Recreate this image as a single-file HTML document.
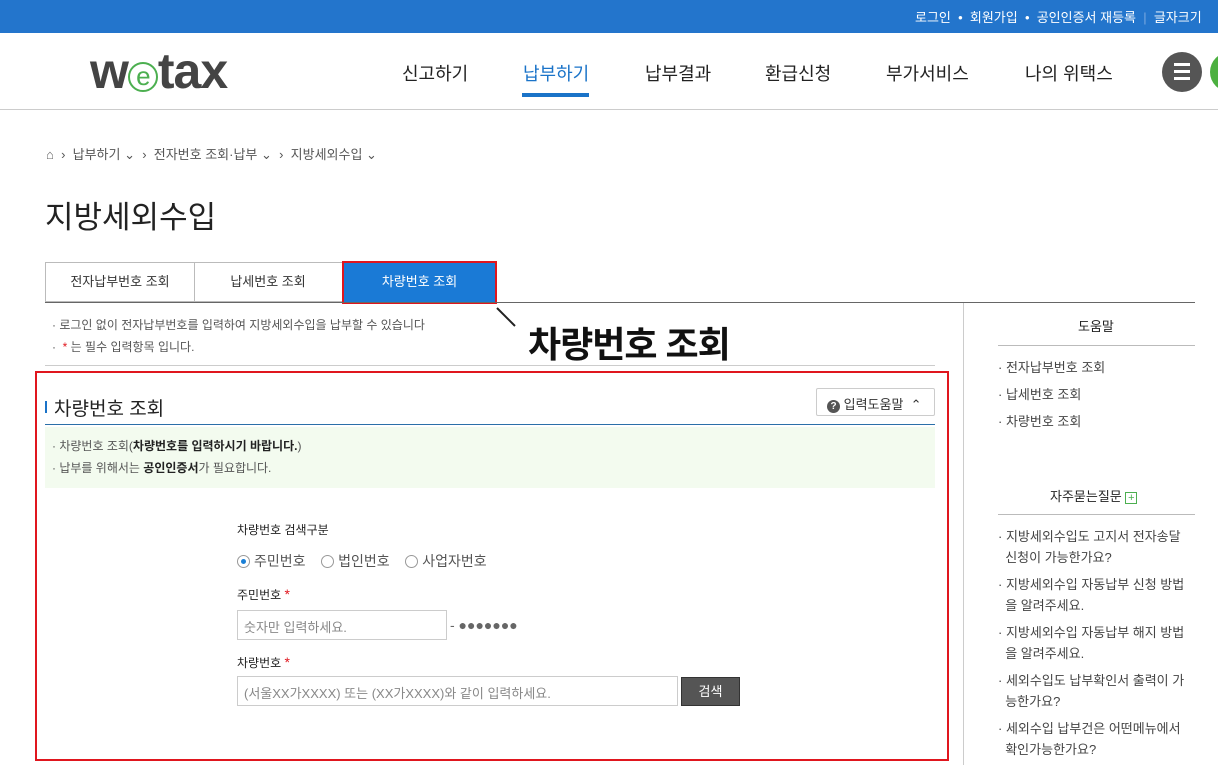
<!DOCTYPE html>
<html><head><meta charset="utf-8"><style>
*{margin:0;padding:0;box-sizing:border-box}
body{width:1218px;height:765px;overflow:hidden;background:#fff;font-family:"Liberation Sans","Noto Sans CJK KR",sans-serif;color:#333;position:relative}
.a{position:absolute;white-space:nowrap}
.top{position:absolute;left:0;top:0;width:1218px;height:33px;background:#2375cc;color:#fff;font-size:13px}
.nav{font-size:18px;color:#222;top:60px}
.rad{display:inline-block;width:13px;height:13px;border:1px solid #999;border-radius:50%;vertical-align:-2px;margin-right:4px;position:relative}
.rad.on::after{content:"";position:absolute;left:3px;top:3px;width:5px;height:5px;border-radius:50%;background:#1a7fd6}
.inp{position:absolute;border:1px solid #ccc;height:30px;font-size:13px;color:#888;padding:7px 6px}
.ri{font-size:13px;color:#444}
</style></head><body>
<div class="top">
<span class="a" style="left:915px;top:7px">로그인 &nbsp;•&nbsp; 회원가입 &nbsp;•&nbsp; 공인인증서 재등록 <span style="color:#7aa9e0">&nbsp;|&nbsp;</span> 글자크기</span>
</div>
<div class="a" style="left:0;top:109px;width:1218px;height:1px;background:#ccc"></div>
<div class="a" style="left:90px;top:42px;font-size:50px;font-weight:bold;color:#444;letter-spacing:-1px">w<span style="display:inline-block;width:30px;height:30px;border:2px solid #4caf50;border-radius:50%;color:#4caf50;font-size:26px;font-weight:normal;line-height:25px;text-align:center;vertical-align:3px">e</span>tax</div>
<span class="a nav" style="left:402px">신고하기</span>
<span class="a nav" style="left:523px;color:#1a73c8">납부하기</span>
<div class="a" style="left:522px;top:93px;width:67px;height:4px;background:#1a73c8"></div>
<span class="a nav" style="left:645px">납부결과</span>
<span class="a nav" style="left:765px">환급신청</span>
<span class="a nav" style="left:886px">부가서비스</span>
<span class="a nav" style="left:1025px">나의 위택스</span>
<div class="a" style="left:1162px;top:52px;width:40px;height:40px;border-radius:50%;background:#555"></div>
<div class="a" style="left:1174px;top:63px;width:16px;height:3px;background:#fff;box-shadow:0 7px 0 #fff,0 14px 0 #fff"></div>
<div class="a" style="left:1210px;top:52px;width:40px;height:40px;border-radius:50%;background:#4cb040"></div>

<div class="a" style="left:46px;top:144px;font-size:13px;color:#555">
<span style="color:#666">⌂</span> &nbsp;›&nbsp; 납부하기 ⌄ &nbsp;›&nbsp; 전자번호 조회·납부 ⌄ &nbsp;›&nbsp; 지방세외수입 ⌄</div>
<div class="a" style="left:45px;top:192px;font-size:31px;color:#222">지방세외수입</div>

<div class="a" style="left:45px;top:262px;width:150px;height:40px;border:1px solid #bbb;font-size:13px;text-align:center;line-height:38px">전자납부번호 조회</div>
<div class="a" style="left:194px;top:262px;width:149px;height:40px;border:1px solid #bbb;border-left:none;font-size:13px;text-align:center;line-height:38px">납세번호 조회</div>
<div class="a" style="left:342px;top:261px;width:155px;height:43px;border:2px solid #e0161e;background:#1a7ad6;color:#fff;font-size:13px;text-align:center;line-height:38px">차량번호 조회</div>
<div class="a" style="left:497px;top:302px;width:698px;height:1px;background:#666"></div>
<div class="a" style="left:45px;top:302px;width:452px;height:1px;background:#666"></div>
<svg class="a" style="left:495px;top:306px" width="24" height="24"><line x1="2" y1="2" x2="20" y2="20" stroke="#222" stroke-width="2"/></svg>
<div class="a" style="left:528px;top:316px;font-size:36px;font-weight:bold;color:#111;letter-spacing:-1px">차량번호 조회</div>

<div class="a" style="left:52px;top:316px;font-size:12px;color:#555">· 로그인 없이 전자납부번호를 입력하여 지방세외수입을 납부할 수 있습니다</div>
<div class="a" style="left:52px;top:338px;font-size:12px;color:#555">· &nbsp;<span style="color:#e0161e">*</span> 는 필수 입력항목 입니다.</div>
<div class="a" style="left:45px;top:365px;width:890px;height:1px;background:#ccc"></div>
<div class="a" style="left:963px;top:303px;width:1px;height:462px;background:#ccc"></div>

<div class="a" style="left:35px;top:371px;width:914px;height:390px;border:2px solid #e0161e"></div>
<div class="a" style="left:45px;top:401px;width:2px;height:12px;background:#1a73c8"></div>
<div class="a" style="left:54px;top:394px;font-size:19px;color:#222">차량번호 조회</div>
<div class="a" style="left:816px;top:388px;width:119px;height:28px;border:1px solid #ccc;border-radius:2px;font-size:13px;padding:5px 10px;color:#333"><span style="display:inline-block;width:13px;height:13px;border-radius:50%;background:#555;color:#fff;font-size:10px;text-align:center;line-height:13px;font-weight:bold">?</span> 입력도움말 &nbsp;⌃</div>
<div class="a" style="left:45px;top:424px;width:890px;height:1px;background:#2a6fa8"></div>
<div class="a" style="left:45px;top:427px;width:890px;height:61px;background:#f3fbef"></div>
<div class="a" style="left:52px;top:437px;font-size:12px;color:#555">· 차량번호 조회(<b style="color:#222">차량번호를 입력하시기 바랍니다.</b>)</div>
<div class="a" style="left:52px;top:459px;font-size:12px;color:#555">· 납부를 위해서는 <b style="color:#222">공인인증서</b>가 필요합니다.</div>

<div class="a" style="left:237px;top:521px;font-size:12px;color:#222">차량번호 검색구분</div>
<div class="a" style="left:237px;top:551px;font-size:14px;color:#555"><span class="rad on"></span>주민번호 &nbsp;&nbsp;&nbsp;<span class="rad"></span>법인번호 &nbsp;&nbsp;&nbsp;<span class="rad"></span>사업자번호</div>
<div class="a" style="left:237px;top:586px;font-size:12px;color:#222">주민번호 <span style="color:#e0161e;font-size:14px">*</span></div>
<div class="inp" style="left:237px;top:610px;width:210px;padding-top:6px">숫자만 입력하세요.</div>
<div class="a" style="left:450px;top:617px;font-size:14px;color:#666">- ●●●●●●●</div>
<div class="a" style="left:237px;top:654px;font-size:12px;color:#222">차량번호 <span style="color:#e0161e;font-size:14px">*</span></div>
<div class="inp" style="left:237px;top:676px;width:441px;padding-top:6px">(서울XX가XXXX) 또는 (XX가XXXX)와 같이 입력하세요.</div>
<div class="a" style="left:681px;top:677px;width:59px;height:29px;background:#555;border:1px solid #333;color:#fff;font-size:13px;text-align:center;line-height:27px">검색</div>

<div class="a" style="left:1078px;top:316px;font-size:13px;color:#222">도움말</div>
<div class="a" style="left:998px;top:345px;width:197px;height:1px;background:#bbb"></div>
<div class="a ri" style="left:998px;top:357px">· 전자납부번호 조회</div>
<div class="a ri" style="left:998px;top:384px">· 납세번호 조회</div>
<div class="a ri" style="left:998px;top:411px">· 차량번호 조회</div>
<div class="a" style="left:1050px;top:486px;font-size:13px;color:#222">자주묻는질문 <span style="display:inline-block;width:12px;height:12px;border:1px solid #4caf50;color:#4caf50;font-size:11px;line-height:10px;text-align:center">+</span></div>
<div class="a" style="left:998px;top:514px;width:197px;height:1px;background:#bbb"></div>
<div class="a ri" style="left:998px;top:526px;line-height:21px">· 지방세외수입도 고지서 전자송달<br>&nbsp; 신청이 가능한가요?</div>
<div class="a ri" style="left:998px;top:574px;line-height:21px">· 지방세외수입 자동납부 신청 방법<br>&nbsp; 을 알려주세요.</div>
<div class="a ri" style="left:998px;top:622px;line-height:21px">· 지방세외수입 자동납부 해지 방법<br>&nbsp; 을 알려주세요.</div>
<div class="a ri" style="left:998px;top:670px;line-height:21px">· 세외수입도 납부확인서 출력이 가<br>&nbsp; 능한가요?</div>
<div class="a ri" style="left:998px;top:718px;line-height:21px">· 세외수입 납부건은 어떤메뉴에서<br>&nbsp; 확인가능한가요?</div>
</body></html>
